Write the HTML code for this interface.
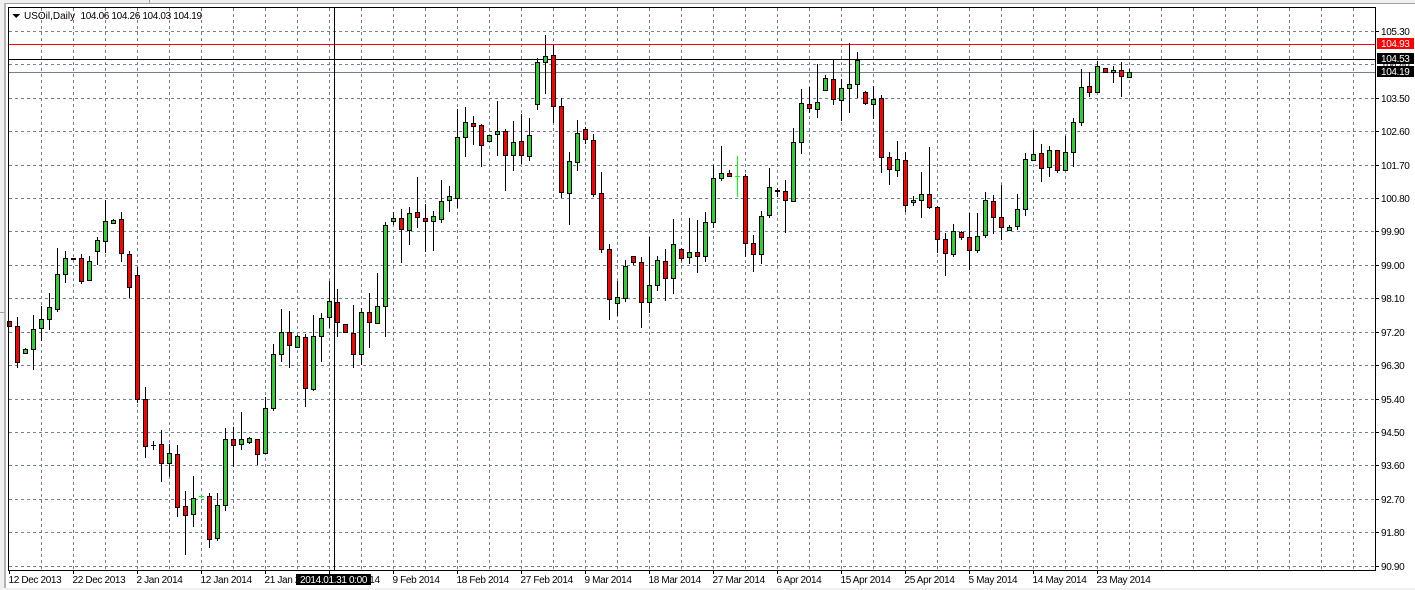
<!DOCTYPE html>
<html><head><meta charset="utf-8"><title>USOil,Daily</title>
<style>
html,body{margin:0;padding:0;background:#fff;width:1415px;height:590px;overflow:hidden}
svg{display:block}
text{font-family:"Liberation Sans",sans-serif;font-size:10px;letter-spacing:-.35px;fill:#000}
.w{fill:#fff}
.n{letter-spacing:0}
</style></head><body>
<svg width="1415" height="590" viewBox="0 0 1415 590" xmlns="http://www.w3.org/2000/svg" shape-rendering="crispEdges">
<rect width="1415" height="590" fill="#fff"/>
<!-- window chrome -->
<rect x="0" y="0" width="1415" height="3" fill="#f0f0f0"/>
<rect x="0" y="0" width="4" height="590" fill="#f0f0f0"/>
<rect x="4" y="3" width="1411" height="1" fill="#a0a0a0"/>
<rect x="4" y="3" width="2" height="587" fill="#b4b4b4"/>
<rect x="0" y="312" width="4" height="1" fill="#a0a0a0"/>
<rect x="149" y="0" width="1" height="3" fill="#a0a0a0"/>
<rect x="0" y="588" width="1415" height="2" fill="#f0f0f0"/>
<!-- grid -->
<path fill="none" stroke="#708090" stroke-dasharray="3 3" d="M9 31.5H1375M9 64.5H1375M9 98.5H1375M9 131.5H1375M9 165.5H1375M9 198.5H1375M9 231.5H1375M9 265.5H1375M9 298.5H1375M9 332.5H1375M9 365.5H1375M9 399.5H1375M9 432.5H1375M9 465.5H1375M9 499.5H1375M9 532.5H1375M9 566.5H1375"/>
<path fill="none" stroke="#708090" stroke-dasharray="3 3" d="M41.5 8V570M73.5 8V570M105.5 8V570M137.5 8V570M169.5 8V570M201.5 8V570M233.5 8V570M265.5 8V570M297.5 8V570M329.5 8V570M361.5 8V570M393.5 8V570M425.5 8V570M457.5 8V570M489.5 8V570M521.5 8V570M553.5 8V570M585.5 8V570M617.5 8V570M649.5 8V570M681.5 8V570M713.5 8V570M745.5 8V570M777.5 8V570M809.5 8V570M841.5 8V570M873.5 8V570M905.5 8V570M937.5 8V570M969.5 8V570M1001.5 8V570M1033.5 8V570M1065.5 8V570M1097.5 8V570M1129.5 8V570M1161.5 8V570M1193.5 8V570M1225.5 8V570M1257.5 8V570M1289.5 8V570M1321.5 8V570M1353.5 8V570"/>
<!-- horizontal levels -->
<rect x="9" y="44" width="1367" height="1" fill="#ff0000"/>
<rect x="9" y="59" width="1367" height="1" fill="#000"/>
<rect x="9" y="72" width="1367" height="1" fill="#708090"/>
<!-- wicks -->
<path fill="none" stroke="#000" d="M9.5 321V327M17.5 317V368M25.5 348V354M33.5 315V370M41.5 306V341M49.5 293V330M57.5 248V312M65.5 251V283M81.5 254V284M89.5 256V281M97.5 237V265M105.5 200V253M113.5 219V224M121.5 212V262M129.5 251V298M137.5 267V403M145.5 387V458M153.5 441V450M151 445.5H156M161.5 430V482M169.5 444V477M177.5 445V517M185.5 491V555M193.5 476V527M209.5 493V548M217.5 493V541M225.5 428V511M233.5 427V467M241.5 412V450M249.5 437V444M257.5 439V465M265.5 397V453M273.5 344V411M281.5 309V362M289.5 311V368M297.5 335V347M305.5 334V407M313.5 315V391M321.5 313V362M329.5 281V328M337.5 289V337M353.5 305V368M361.5 308V365M369.5 293V348M377.5 273V324M385.5 222V337M393.5 212V225M401.5 209V263M409.5 207V245M417.5 177V228M425.5 204V252M433.5 211V251M441.5 180V223M449.5 186V212M457.5 109V208M465.5 107V157M473.5 116V145M481.5 124V167M489.5 135V141M497.5 101V156M505.5 129V191M513.5 121V171M521.5 114V164M529.5 118V161M537.5 58V110M545.5 35V94M553.5 45V123M561.5 98V198M569.5 152V225M577.5 120V171M585.5 127V144M593.5 134V197M601.5 172V253M609.5 244V320M617.5 281V316M625.5 260V302M633.5 256V265M641.5 257V328M649.5 237V313M657.5 256V291M665.5 249V301M673.5 219V294M681.5 248V261M689.5 218V264M697.5 220V273M705.5 212V262M713.5 165V228M721.5 146V181M729.5 170V177M745.5 174V257M753.5 235V272M761.5 211V264M769.5 168V218M777.5 188V197M785.5 180V233M793.5 128V201M801.5 89V154M809.5 87V113M817.5 64V118M825.5 75V91M833.5 59V105M841.5 79V121M849.5 43V113M857.5 52V98M865.5 91V105M873.5 86V119M881.5 95V173M889.5 152V185M897.5 141V177M905.5 152V212M913.5 196V206M921.5 172V218M929.5 147V209M937.5 206V253M945.5 233V276M953.5 224V257M961.5 231V240M969.5 213V270M977.5 213V253M985.5 192V238M993.5 195V234M1001.5 185V240M1009.5 225V231M1017.5 194V230M1025.5 153V216M1033.5 130V160M1041.5 144V182M1049.5 146V177M1057.5 150V173M1065.5 136V170M1073.5 118V167M1081.5 69V126M1089.5 72V97M1097.5 61V93M1113.5 66V83M1121.5 62V97M1129.5 69V77"/>
<!-- lime doji -->
<path fill="none" stroke="#00ff00" d="M201.5 494V498M199 496.5H204M737.5 156V197M735 176.5H740"/>
<!-- black doji -->
<rect x="71" y="258" width="5" height="2" fill="#000"/>
<rect x="775" y="190" width="5" height="2" fill="#000"/>
<!-- bear bodies -->
<path fill="#ff0000" stroke="#000" d="M7.5 321.5h4v5h-4zM15.5 326.5h4v36h-4zM79.5 258.5h4v23h-4zM119.5 219.5h4v34h-4zM127.5 254.5h4v33h-4zM135.5 275.5h4v124h-4zM143.5 399.5h4v47h-4zM159.5 444.5h4v19h-4zM175.5 454.5h4v53h-4zM183.5 506.5h4v9h-4zM207.5 496.5h4v43h-4zM231.5 439.5h4v6h-4zM255.5 439.5h4v15h-4zM287.5 332.5h4v13h-4zM303.5 337.5h4v51h-4zM335.5 302.5h4v20h-4zM343.5 324.5h4v8h-4zM351.5 333.5h4v21h-4zM367.5 312.5h4v10h-4zM399.5 218.5h4v11h-4zM415.5 212.5h4v5h-4zM423.5 218.5h4v3h-4zM471.5 123.5h4v3h-4zM479.5 125.5h4v20h-4zM503.5 131.5h4v24h-4zM519.5 141.5h4v14h-4zM551.5 55.5h4v51h-4zM559.5 106.5h4v86h-4zM583.5 129.5h4v10h-4zM591.5 140.5h4v54h-4zM599.5 193.5h4v56h-4zM607.5 249.5h4v50h-4zM631.5 256.5h4v6h-4zM639.5 262.5h4v40h-4zM663.5 261.5h4v17h-4zM679.5 249.5h4v9h-4zM695.5 252.5h4v4h-4zM727.5 173.5h4v3h-4zM743.5 176.5h4v67h-4zM751.5 243.5h4v11h-4zM783.5 191.5h4v9h-4zM807.5 104.5h4v4h-4zM831.5 79.5h4v20h-4zM863.5 92.5h4v11h-4zM879.5 98.5h4v59h-4zM887.5 157.5h4v12h-4zM903.5 160.5h4v45h-4zM927.5 194.5h4v13h-4zM935.5 207.5h4v32h-4zM943.5 239.5h4v14h-4zM959.5 232.5h4v5h-4zM967.5 237.5h4v13h-4zM991.5 201.5h4v16h-4zM999.5 217.5h4v10h-4zM1039.5 153.5h4v15h-4zM1055.5 150.5h4v20h-4zM1087.5 86.5h4v6h-4zM1103.5 68.5h4v4h-4zM1119.5 70.5h4v6h-4z"/>
<!-- bull bodies -->
<path fill="#32cd32" stroke="#000" d="M23.5 349.5h4v4h-4zM31.5 329.5h4v20h-4zM39.5 319.5h4v9h-4zM47.5 307.5h4v12h-4zM55.5 274.5h4v35h-4zM63.5 258.5h4v16h-4zM87.5 261.5h4v19h-4zM95.5 240.5h4v11h-4zM103.5 221.5h4v20h-4zM111.5 220.5h4v3h-4zM167.5 453.5h4v10h-4zM191.5 498.5h4v16h-4zM215.5 505.5h4v33h-4zM223.5 439.5h4v66h-4zM239.5 439.5h4v5h-4zM247.5 438.5h4v4h-4zM263.5 408.5h4v45h-4zM271.5 354.5h4v54h-4zM279.5 332.5h4v22h-4zM295.5 336.5h4v11h-4zM311.5 336.5h4v53h-4zM319.5 318.5h4v18h-4zM327.5 301.5h4v16h-4zM359.5 312.5h4v42h-4zM375.5 306.5h4v17h-4zM383.5 225.5h4v81h-4zM391.5 218.5h4v3h-4zM407.5 213.5h4v17h-4zM431.5 216.5h4v5h-4zM439.5 201.5h4v18h-4zM447.5 196.5h4v4h-4zM455.5 137.5h4v61h-4zM463.5 122.5h4v15h-4zM487.5 135.5h4v6h-4zM495.5 131.5h4v3h-4zM511.5 142.5h4v13h-4zM527.5 135.5h4v21h-4zM535.5 62.5h4v42h-4zM543.5 56.5h4v6h-4zM567.5 161.5h4v32h-4zM575.5 133.5h4v29h-4zM615.5 297.5h4v6h-4zM623.5 266.5h4v32h-4zM647.5 285.5h4v17h-4zM655.5 260.5h4v25h-4zM671.5 244.5h4v34h-4zM687.5 252.5h4v5h-4zM703.5 222.5h4v34h-4zM711.5 178.5h4v44h-4zM719.5 173.5h4v5h-4zM759.5 216.5h4v38h-4zM767.5 187.5h4v28h-4zM791.5 142.5h4v59h-4zM799.5 103.5h4v39h-4zM815.5 102.5h4v7h-4zM823.5 78.5h4v12h-4zM839.5 88.5h4v12h-4zM847.5 84.5h4v4h-4zM855.5 60.5h4v24h-4zM871.5 99.5h4v5h-4zM895.5 159.5h4v11h-4zM911.5 200.5h4v2h-4zM919.5 194.5h4v6h-4zM951.5 231.5h4v23h-4zM975.5 236.5h4v14h-4zM983.5 200.5h4v35h-4zM1007.5 227.5h4v3h-4zM1015.5 209.5h4v17h-4zM1023.5 159.5h4v50h-4zM1031.5 154.5h4v6h-4zM1047.5 150.5h4v17h-4zM1063.5 152.5h4v18h-4zM1071.5 122.5h4v30h-4zM1079.5 87.5h4v35h-4zM1095.5 66.5h4v26h-4zM1111.5 70.5h4v2h-4zM1127.5 72.5h4v5h-4z"/>
<!-- crosshair -->
<rect x="334" y="8" width="1" height="562" fill="#000"/>
<!-- frame -->
<path fill="none" stroke="#000" d="M8.5 7.5H1375.5V570.5H8.5Z"/>
<!-- ticks -->
<path fill="none" stroke="#000" d="M9.5 571V574M73.5 571V574M137.5 571V574M201.5 571V574M265.5 571V574M329.5 571V574M393.5 571V574M457.5 571V574M521.5 571V574M585.5 571V574M649.5 571V574M713.5 571V574M777.5 571V574M841.5 571V574M905.5 571V574M969.5 571V574M1033.5 571V574M1097.5 571V574M1376 31.5H1379M1376 98.5H1379M1376 131.5H1379M1376 165.5H1379M1376 198.5H1379M1376 231.5H1379M1376 265.5H1379M1376 298.5H1379M1376 332.5H1379M1376 365.5H1379M1376 399.5H1379M1376 432.5H1379M1376 465.5H1379M1376 499.5H1379M1376 532.5H1379M1376 566.5H1379"/>
<!-- header -->
<path d="M12 14h8l-4 4z" fill="#000"/>
<text x="24" y="19" class="n">USOil,Daily</text>
<text x="80.5" y="19">104.06 104.26 104.03 104.19</text>
<!-- price axis -->
<g shape-rendering="auto">
<text x="1381" y="35">105.30</text>
<text x="1381" y="68">104.40</text>
<text x="1381" y="102">103.50</text>
<text x="1381" y="135">102.60</text>
<text x="1381" y="169">101.70</text>
<text x="1381" y="202">100.80</text>
<text x="1381" y="235">99.90</text>
<text x="1381" y="269">99.00</text>
<text x="1381" y="302">98.10</text>
<text x="1381" y="336">97.20</text>
<text x="1381" y="369">96.30</text>
<text x="1381" y="403">95.40</text>
<text x="1381" y="436">94.50</text>
<text x="1381" y="469">93.60</text>
<text x="1381" y="503">92.70</text>
<text x="1381" y="536">91.80</text>
<text x="1381" y="570">90.90</text>
</g>
<rect x="1377" y="38" width="37" height="11" fill="#ff0000"/>
<rect x="1377" y="53" width="37" height="11" fill="#000"/>
<rect x="1377" y="66" width="37" height="11" fill="#000"/>
<g shape-rendering="auto">
<text x="1381" y="47" class="w">104.93</text>
<text x="1381" y="62" class="w">104.53</text>
<text x="1381" y="75" class="w">104.19</text>
<!-- time axis -->
<text x="8.5" y="583">12 Dec 2013</text>
<text x="72.5" y="583">22 Dec 2013</text>
<text x="136.5" y="583">2 Jan 2014</text>
<text x="200.5" y="583">12 Jan 2014</text>
<text x="264.5" y="583">21 Jan 2014</text>
<text x="328.5" y="583">30 Jan 2014</text>
<text x="392.5" y="583">9 Feb 2014</text>
<text x="456.5" y="583">18 Feb 2014</text>
<text x="520.5" y="583">27 Feb 2014</text>
<text x="584.5" y="583">9 Mar 2014</text>
<text x="648.5" y="583">18 Mar 2014</text>
<text x="712.5" y="583">27 Mar 2014</text>
<text x="776.5" y="583">6 Apr 2014</text>
<text x="840.5" y="583">15 Apr 2014</text>
<text x="904.5" y="583">25 Apr 2014</text>
<text x="968.5" y="583">5 May 2014</text>
<text x="1032.5" y="583">14 May 2014</text>
<text x="1096.5" y="583">23 May 2014</text>
</g>
<rect x="296" y="574" width="75" height="11" fill="#000"/>
<text x="300" y="583" class="w" shape-rendering="auto">2014.01.31 0:00</text>
</svg>
</body></html>
